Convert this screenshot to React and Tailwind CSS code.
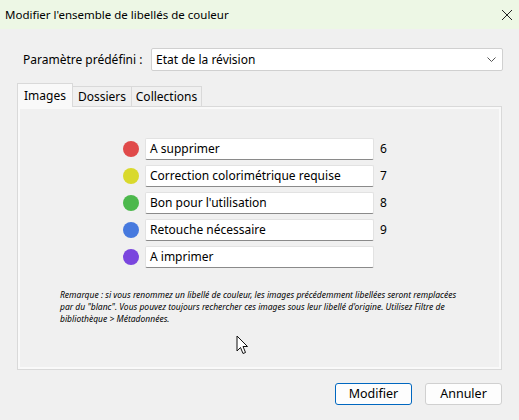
import React from 'react';

const labels = [
  { color: 'bg-[#e04a4a]', text: 'A supprimer', key: '6' },
  { color: 'bg-[#d9d92c]', text: 'Correction colorimétrique requise', key: '7' },
  { color: 'bg-[#4cb84c]', text: "Bon pour l'utilisation", key: '8' },
  { color: 'bg-[#4679de]', text: 'Retouche nécessaire', key: '9' },
  { color: 'bg-[#7a46de]', text: 'A imprimer', key: '' },
];

const Cursor = () => (
  <svg width="14" height="21" viewBox="0 0 14 21" className="absolute left-[236px] top-[335px]">
    <path d="M1 1 L1 16 L4.5 12.5 L7 18.5 L9.5 17.5 L7 11.5 L11.5 11.5 Z" fill="#fff" stroke="#111" strokeWidth="1" strokeLinejoin="round" />
  </svg>
);

export default function App() {
  return (
    <div className="relative w-[519px] h-[420px] overflow-hidden bg-[#f0f0f0] text-black font-['Noto_Sans',sans-serif]">
      {/* title bar */}
      <div className="h-[29px] bg-[#edf7e5] flex items-center justify-between pl-[5px] pr-[6px]">
        <span className="text-[11.5px] whitespace-nowrap">Modifier l'ensemble de libellés de couleur</span>
        <svg width="12" height="12" viewBox="0 0 12 12">
          <path d="M1 1 L11 11 M11 1 L1 11" stroke="#222" strokeWidth="1" />
        </svg>
      </div>

      {/* preset */}
      <div className="flex items-center mt-[19px] ml-[23px]">
        <span className="w-[128px] text-[12px] whitespace-nowrap">Paramètre prédéfini :</span>
        <div className="w-[352px] h-[23px] bg-white border border-[#d0d0d0] rounded-[2px] flex items-center justify-between pl-[4px] pr-[6px]">
          <span className="text-[12px]">Etat de la révision</span>
          <svg width="9" height="6" viewBox="0 0 9 6">
            <path d="M0.5 0.5 L4.5 4.5 L8.5 0.5" fill="none" stroke="#555" strokeWidth="1" />
          </svg>
        </div>
      </div>

      {/* tabs */}
      <div className="ml-[17px] mt-[12px] flex items-end relative z-10 -mb-px">
        <div className="h-[24px] w-[56px] bg-[#f9f9f9] border border-b-0 border-[#d9d9d9] flex items-center justify-center text-[12px]">Images</div>
        <div className="h-[21px] w-[59px] bg-[#f0f0f0] border border-l-0 border-[#d9d9d9] flex items-center justify-center text-[12px]">Dossiers</div>
        <div className="h-[21px] w-[70px] bg-[#f0f0f0] border border-l-0 border-[#d9d9d9] flex items-center justify-center text-[12px]">Collections</div>
      </div>

      {/* panel */}
      <div className="ml-[17px] w-[485px] h-[264px] border border-[#d9d9d9] bg-[#f9f9f9] p-[2px]">
        <div className="h-full bg-[#f0f0f0] pt-[29px]">
          <div className="flex flex-col gap-[5px]">
            {labels.map((l, i) => (
              <div key={i} className="flex items-center h-[22px]">
                <div className={`ml-[103px] w-[16px] h-[16px] rounded-full ${l.color}`} />
                <div className="ml-[6px] w-[229px] h-[22px] bg-white border border-[#e2e2e2] border-b-[#8a8a8a] rounded-[2px] flex items-center pl-[4px] text-[12px]">
                  {l.text}
                </div>
                <span className="ml-[6px] text-[12px]">{l.key}</span>
              </div>
            ))}
          </div>
          <p className="mt-[21px] ml-[40px] w-[402px] text-[8.5px] leading-[12px] italic">
            Remarque : si vous renommez un libellé de couleur, les images précédemment libellées seront remplacées par du "blanc". Vous pouvez toujours rechercher ces images sous leur libellé d'origine. Utilisez Filtre de bibliothèque &gt; Métadonnées.
          </p>
        </div>
      </div>

      {/* buttons */}
      <div className="flex mt-[13px] ml-[335px] gap-[13px]">
        <button className="w-[77px] h-[22px] bg-[#fdfdfd] border border-[#0067c0] rounded-[3px] text-[12.5px] flex items-center justify-center">Modifier</button>
        <button className="w-[77px] h-[22px] bg-[#fdfdfd] border border-[#d0d0d0] rounded-[3px] text-[12.5px] flex items-center justify-center">Annuler</button>
      </div>

      <Cursor />
    </div>
  );
}
